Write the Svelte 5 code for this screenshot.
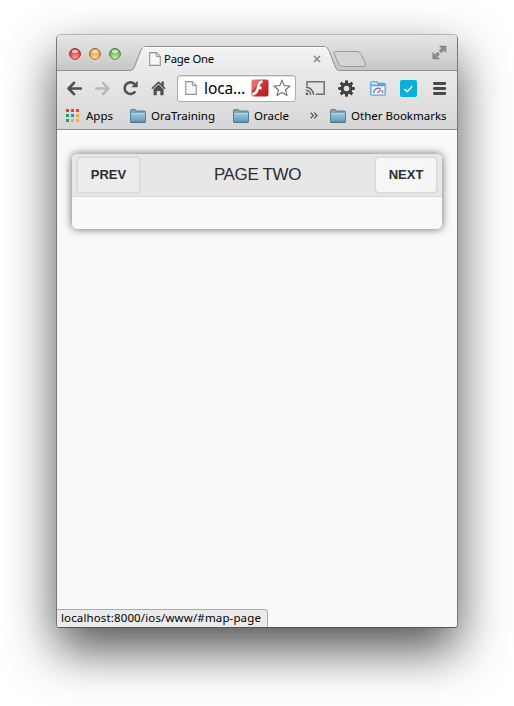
<script>
  const lights = [
    ['#d43a40', '#ff9a98', '#8e3236'],
    ['#e09a3c', '#ffdc8c', '#94642a'],
    ['#62ae4e', '#c4f0a4', '#46803a'],
  ];
  const dots = ['#f23a3a', '#f23a3a', '#f23a3a', '#1fa463', '#1a8cf0', '#ffa63a', '#1fa463', '#ffa63a', '#ffa63a'];
</script>

{#snippet folder()}
  <svg class="folder" width="16" height="14" viewBox="0 0 16 14">
    <defs>
      <linearGradient id="fold" x1="0" y1="0" x2="0" y2="1">
        <stop offset="0" stop-color="#a5c9de" />
        <stop offset="1" stop-color="#6399ba" />
      </linearGradient>
    </defs>
    <path d="M.5 13V1.8Q.5.5 1.8.5H5.3L6.5 2H14.2Q15.5 2 15.5 3.2V13Z" fill="#79a5c0" stroke="#557f99" />
    <path d="M1 4H15V12.8H1Z" fill="url(#fold)" />
    <path d="M1 4.5H15" stroke="#b5d3e4" />
    <path d="M.5 13.3H15.5" stroke="#416980" />
  </svg>
{/snippet}

{#snippet page()}
  <svg width="12" height="14" viewBox="0 0 12 14">
    <path d="M.7.6H7.3L11.3 4.6V13.4H.7Z" fill="#f8f8f8" stroke="#919191" stroke-width="1.1" />
    <path d="M7.3.8V4.6H11.1" fill="#e2e2e2" stroke="#919191" />
  </svg>
{/snippet}

<main>
  <div class="window">
    <div class="strip">
      <svg class="tabs" width="400" height="36" viewBox="0 0 400 36">
        <defs>
          <linearGradient id="tab" x1="0" y1="0" x2="0" y2="1">
            <stop offset="0" stop-color="#f4f4f4" />
            <stop offset="1" stop-color="#e9e9e9" />
          </linearGradient>
        </defs>
        <path d="M0 35.5H73Q76 35.5 77.5 31.5L83.5 16Q85 11.5 88.5 11.5H267Q270.5 11.5 272 15.5L278 31Q279.5 35.5 282 35.5H400" fill="none" stroke="#929292" />
        <path d="M74 36Q77 35.5 78.2 32L84.2 16.5Q85.5 12 88.5 12H267Q270 12 271.3 16L277.3 31.5Q279 35.5 282 36Z" fill="url(#tab)" />
        <path d="M86 12.5H269" stroke="#fafafa" />
        <path d="M278.5 16.5H300Q303 16.5 304.2 19.5L308.5 29Q309.3 31.5 307 31.5H285.5Q283 31.5 281.8 29L277.3 19Q276.5 16.5 278.5 16.5Z" fill="#d4d4d4" stroke="#9a9a9a" />
      </svg>
      <div class="lights">
        {#each lights as [base, glow, ring], i}
          <svg width="14" height="14" viewBox="0 0 14 14">
            <defs>
              <radialGradient id="light{i}" cx=".5" cy=".82" r=".65">
                <stop offset="0" stop-color={glow} />
                <stop offset="1" stop-color={base} />
              </radialGradient>
            </defs>
            <circle cx="7" cy="7.7" r="6" fill="#f4f4f4" opacity=".8" />
            <circle cx="7" cy="7" r="5.5" fill="url(#light{i})" stroke={ring} stroke-width=".9" />
            <ellipse cx="7" cy="4.4" rx="3" ry="1.7" fill="#fff" opacity=".65" />
          </svg>
        {/each}
      </div>
      <div class="tabicon">{@render page()}</div>
      <span class="tabtitle">Page One</span>
      <svg class="close" width="8" height="8" viewBox="0 0 8 8"><path d="M1 1L7 7M7 1L1 7" stroke="#858585" stroke-width="1.6" /></svg>
      <svg class="expand" width="15" height="15" viewBox="0 0 15 15">
        <path d="M7.5 1H14V7.5L11.8 5.3L9.2 7.9L7.1 5.8L9.7 3.2ZM.8 7.5L3 9.7L5.6 7.1L7.7 9.2L5.1 11.8L7.3 14H.8Z" fill="#8d8d8d" stroke="#777" stroke-width=".5" />
      </svg>
    </div>

    <div class="toolbar">
      <svg width="15" height="15" viewBox="0 0 15 15"><path d="M14 7.5H2M7 1.8L1.5 7.5L7 13.2" fill="none" stroke="#505050" stroke-width="2.6" stroke-linecap="round" stroke-linejoin="round" /></svg>
      <svg class="g13" width="15" height="15" viewBox="0 0 15 15"><path d="M1 7.5H13M8 1.8L13.5 7.5L8 13.2" fill="none" stroke="#b8b8b8" stroke-width="2.4" stroke-linecap="round" stroke-linejoin="round" /></svg>
      <svg class="g13" width="15" height="16" viewBox="0 0 15 16"><path d="M12.3 11.4A5.8 5.8 0 1 1 11.5 4" fill="none" stroke="#505050" stroke-width="2.6" /><path d="M14.7.8V7.2H8.3Z" fill="#505050" /></svg>
      <svg class="g13" width="15" height="16" viewBox="0 0 15 16"><path d="M.3 8.3L7.5 1.2L10.4 4V1.6H12.8V6.3L14.7 8.3L13.6 9.2L7.5 3.5L1.4 9.2Z" fill="#505050" /><path d="M2.5 9.2L7.5 4.4L12.6 9.2V15.2H9.3V11H5.8V15.2H2.5Z" fill="#505050" /></svg>
      <div class="omni">
        <div class="omnipage">{@render page()}</div>
        <span class="url">loca…</span>
        <svg class="flash" width="18" height="18" viewBox="0 0 18 18">
          <defs>
            <linearGradient id="flash" x1="0" y1="0" x2="1" y2="1">
              <stop offset="0" stop-color="#e2504e" />
              <stop offset="1" stop-color="#b3191d" />
            </linearGradient>
          </defs>
          <rect x=".5" y=".5" width="17" height="17" rx="2" fill="url(#flash)" />
          <path d="M0 0H9L4 9L0 12Z" fill="#fff" opacity=".22" />
          <path d="M11.5 1.2C8 1.3 6.8 4 6 7.4C5 11.6 4 13.5 1.3 13.8V16.6C5.5 16.2 6.9 13.2 7.8 10.2H10.5V7.5H8.5C9.1 5.3 9.7 4.1 11.5 4Z" fill="#fff" />
        </svg>
        <svg class="star" width="18" height="18" viewBox="0 0 18 18"><path d="M9 1.1L11.2 6.6L17.1 7L12.6 10.8L14 16.6L9 13.4L4 16.6L5.4 10.8L.9 7L6.8 6.6Z" fill="#fdfdfd" stroke="#777" stroke-width="1.2" stroke-linejoin="round" /></svg>
      </div>
      <svg class="g9" width="20" height="16" viewBox="0 0 20 16"><path d="M2 6V1.7H19.2V14.3H10.5" fill="none" stroke="#707070" stroke-width="1.5" /><path d="M1 7.3A7.5 7.5 0 0 1 8.5 14.8M1 10.2A4.7 4.7 0 0 1 5.7 14.8" fill="none" stroke="#606060" stroke-width="1.4" /><path d="M.8 12.3A2.7 2.7 0 0 1 3.4 15H.8Z" fill="#606060" /></svg>
      <svg class="g13" width="17" height="17" viewBox="-8.5 -8.5 17 17">
        {#each [0, 45, 90, 135] as a}
          <rect x="-1.5" y="-8.3" width="3" height="16.6" rx=".7" transform="rotate({a})" fill="#414141" />
        {/each}
        <circle r="5.9" fill="#414141" /><circle r="2.8" fill="#e2e2e2" />
      </svg>
      <svg class="g15" width="16" height="15" viewBox="0 0 16 15">
        <path d="M.8 13V2Q.8.8 2 .8H6.5L7.7 2.4H14Q15.2 2.4 15.2 3.6V13Q15.2 14.2 14 14.2H2Q.8 14.2.8 13Z" fill="#f2f6fb" stroke="#5a9fee" stroke-width="1.3" />
        <path d="M1.2 3H14.8V5.3H1.2Z" fill="#5a9fee" /><path d="M2.5 3.3H4M5.3 3.3H7" stroke="#fff" />
        <path d="M3.7 11.9A4.5 4.5 0 0 1 10.5 8M12 9.1A4.5 4.5 0 0 1 12.6 11.9" fill="none" stroke="#6b84a8" stroke-width="1.5" />
        <path d="M7.6 11.9L10.7 8.9" stroke="#d44b4b" stroke-width="1.3" />
      </svg>
      <svg class="g14" width="17" height="17" viewBox="0 0 17 17"><rect width="17" height="17" rx="2" fill="#08afd8" /><path d="M4.4 9L7.2 11.7L12.2 6.3" fill="none" stroke="#fff" stroke-width="1.5" /></svg>
      <svg class="g16" width="14" height="13" viewBox="0 0 14 13"><path d="M1.4 1.5H11.8M1.4 6.5H11.8M1.4 11.5H11.8" stroke="#484848" stroke-width="2.8" stroke-linecap="round" /></svg>
    </div>

    <div class="bookmarks">
      <div class="item apps">
        <svg width="13" height="13" viewBox="0 0 13 13">
          {#each dots as c, i}
            <rect x={(i % 3) * 5} y={Math.floor(i / 3) * 5} width="3" height="3" fill={c} />
          {/each}
        </svg>
        <span>Apps</span>
      </div>
      <div class="item ora">{@render folder()}<span>OraTraining</span></div>
      <div class="item oracle">{@render folder()}<span>Oracle</span></div>
      <svg class="more" width="8" height="7" viewBox="0 0 8 7"><path d="M.7.7L3.3 3.5L.7 6.3M4.3.7L6.9 3.5L4.3 6.3" fill="none" stroke="#505050" stroke-width="1.2" /></svg>
      <div class="item other">{@render folder()}<span>Other Bookmarks</span></div>
    </div>

    <div class="content">
      <section class="card">
        <header>
          <button class="prev">PREV</button>
          <h1>PAGE TWO</h1>
          <button class="next">NEXT</button>
        </header>
      </section>
      <div class="status">localhost:8000/ios/www/#map-page</div>
    </div>
  </div>
</main>

<style>
  :global(body) { margin: 0; background: #fff; }
  main { box-sizing: border-box; width: 514px; height: 706px; padding: 34px 56px; background: #fff; overflow: hidden; font-family: "Noto Sans", sans-serif; color: #000; }
  svg { display: block; flex: none; }
  .window { box-sizing: border-box; width: 402px; height: 594px; border: 1px solid #777; border-top-color: #b4b4b4; border-bottom-color: #555; border-radius: 5px 5px 4px 4px; overflow: hidden; display: flex; flex-direction: column; box-shadow: 0 22px 50px rgba(0, 0, 0, .68); background: #f9f9f9; }
  .strip { height: 36px; display: flex; position: relative; background: linear-gradient(#e5e5e5, #dcdcdc 35%, #c5c5c5); box-sizing: border-box; }
  .tabs { position: absolute; left: 0; top: 0; }
  .lights { display: flex; gap: 6px; padding: 12px 0 0 11px; width: 81px; position: relative; box-sizing: border-box; }
  .tabicon { margin: 17px 0 0 11px; position: relative; }
  .tabtitle { position: relative; margin: 15px 0 0 3px; width: 145px; font-size: 11.3px; line-height: 18px; white-space: nowrap; letter-spacing: -.2px; }
  .close { position: relative; margin: 20px 0 0 4px; }
  .expand { position: relative; margin: 10px 0 0 111px; }
  .toolbar { height: 34px; box-sizing: border-box; padding-left: 10px; display: flex; align-items: center; background: linear-gradient(#e9e9e9, #dfdfdf); }
  .g9 { margin-left: 9px; } .g13 { margin-left: 13px; } .g14 { margin-left: 14px; } .g15 { margin-left: 15px; } .g16 { margin-left: 16px; }
  .omni { box-sizing: border-box; width: 119px; height: 27px; border: 1px solid #acacac; border-radius: 3px; background: #fff; margin-left: 11px; display: flex; align-items: center; flex: none; box-shadow: inset 0 1px 1px #ddd; }
  .omnipage { margin-left: 7px; }
  .url { width: 42px; margin: -1px 0 0 7px; font-size: 15.5px; line-height: 22px; white-space: nowrap; letter-spacing: -.1px; }
  .flash { margin-left: 5px; } .star { margin-left: 4px; }
  .bookmarks { height: 25px; box-sizing: border-box; padding-bottom: 3px; display: flex; align-items: center; background: linear-gradient(#dfdfdf, #d6d6d6); border-bottom: 1px solid #8c8c8c; font-size: 11.5px; line-height: 18px; white-space: nowrap; }
  .item { display: flex; align-items: center; flex: none; }
  .item span { margin-left: 5px; }
  .apps { width: 64px; padding-left: 9px; } .apps span { margin-left: 7px; }
  .ora { width: 103px; } .oracle { width: 77px; } .more { margin-right: 12px; }
  .content { flex: 1; background: #f9f9f9; display: flex; flex-direction: column; justify-content: space-between; padding-top: 24px; }
  .card { width: 370px; height: 75px; margin-left: 15px; border-radius: 5px; background: #f9f9f9; box-shadow: 0 0 9px rgba(0, 0, 0, .6); }
  header { height: 43px; box-sizing: border-box; border-bottom: 1px solid #d8d8d8; border-radius: 5px 5px 0 0; background: #e7e7e7; display: flex; align-items: flex-start; justify-content: space-between; padding: 3px 5px; }
  button { box-sizing: border-box; width: 63px; height: 36px; padding: 0; border: 1px solid #dadada; border-radius: 4px; font: bold 13px/34px "Liberation Sans", sans-serif; color: #2e2e2e; box-shadow: 0 0 2px #ccc; }
  .prev { background: #ececec; } .next { width: 62px; background: #f6f6f6; }
  h1 { margin: 0; font: 17px/35px "Liberation Sans", sans-serif; letter-spacing: -.35px; color: #2c2c2c; white-space: nowrap; }
  .status { box-sizing: border-box; width: 211px; height: 18px; border: 1px solid #aaa; border-left: 0; border-bottom: 0; border-radius: 0 4px 0 0; background: #ebebeb; padding-left: 4px; font-size: 11.5px; line-height: 16px; letter-spacing: .13px; white-space: nowrap; }
</style>
